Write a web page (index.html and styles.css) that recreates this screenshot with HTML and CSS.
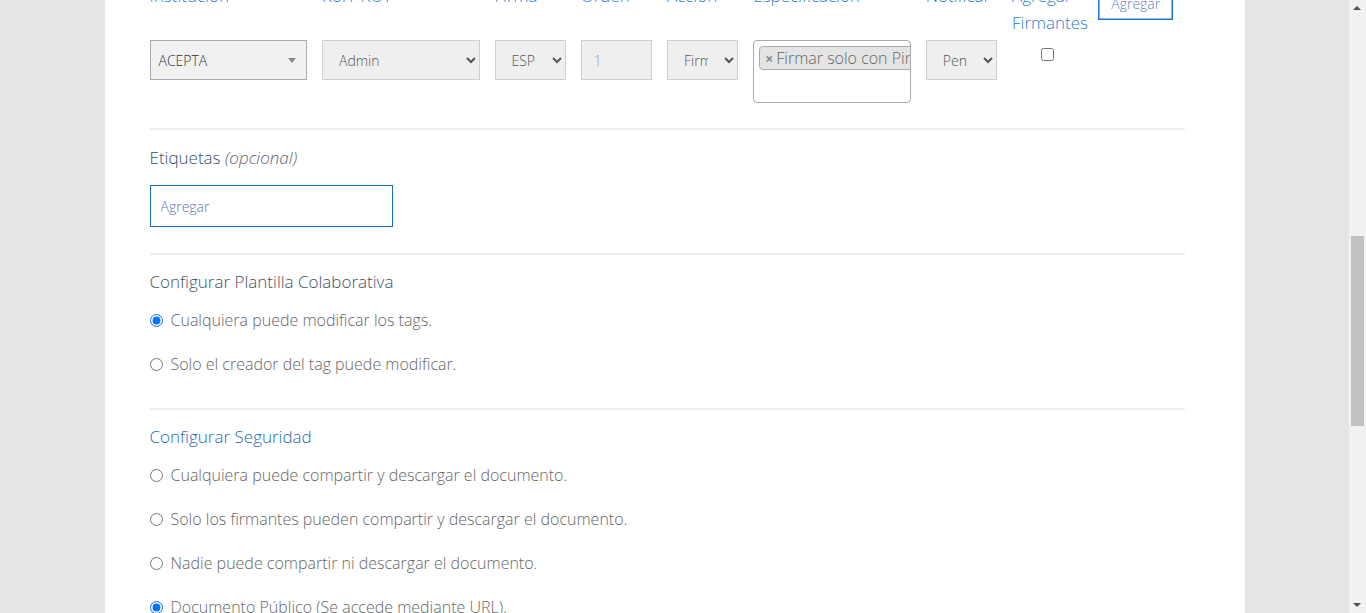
FILE: index.html
```html
<!DOCTYPE html>
<html lang="es">
<head>
<meta charset="utf-8">
<title>Firmantes</title>
<link rel="stylesheet" href="styles.css">
</head>
<body>
<div class="page">
  <div class="above">
    <h2 class="above-title">Nuevo documento</h2>
  </div>

  <div class="signer-row" id="signerRow">
    <div class="col span2">
      <div class="lbl">Institución</div>
      <div class="s2">
        <span>ACEPTA</span>
        <span class="s2-arrow"></span>
      </div>
    </div>
    <div class="col span2">
      <div class="lbl">Rol / RUT</div>
      <select class="ctl sel"><option>Admin</option></select>
    </div>
    <div class="col">
      <div class="lbl">Firma</div>
      <select class="ctl sel"><option>ESP</option></select>
    </div>
    <div class="col">
      <div class="lbl">Orden</div>
      <input class="ctl num" type="text" value="1" readonly>
    </div>
    <div class="col">
      <div class="lbl">Acción</div>
      <select class="ctl sel"><option>Firmar</option></select>
    </div>
    <div class="col span2">
      <div class="lbl">Especificación</div>
      <div class="multi">
        <span class="chip"><span class="chip-x">×</span>Firmar solo con Pin</span>
      </div>
    </div>
    <div class="col">
      <div class="lbl">Notificar</div>
      <select class="ctl sel"><option>Pendiente</option></select>
    </div>
    <div class="col">
      <div class="lbl">Agregar Firmantes</div>
      <div class="chk-wrap"><input type="checkbox" class="chk"></div>
    </div>
    <div class="col">
      <button class="btn-add" type="button">Agregar</button>
    </div>
  </div>

  <section class="section first">
    <div class="heading dark">Etiquetas <em>(opcional)</em></div>
    <input class="tag-input" type="text" placeholder="Agregar">
  </section>

  <section class="section">
    <div class="heading slate">Configurar Plantilla Colaborativa</div>
    <div class="radios">
      <label class="radio"><input type="radio" name="collab" checked>Cualquiera puede modificar los tags.</label>
      <label class="radio"><input type="radio" name="collab">Solo el creador del tag puede modificar.</label>
    </div>
  </section>

  <section class="section">
    <div class="heading blue">Configurar Seguridad</div>
    <div class="radios">
      <label class="radio"><input type="radio" name="sec">Cualquiera puede compartir y descargar el documento.</label>
      <label class="radio"><input type="radio" name="sec">Solo los firmantes pueden compartir y descargar el documento.</label>
      <label class="radio"><input type="radio" name="sec">Nadie puede compartir ni descargar el documento.</label>
      <label class="radio"><input type="radio" name="sec" checked>Documento Público (Se accede mediante URL).</label>
    </div>
  </section>

  <div class="below"></div>
</div>

<div class="vscroll" aria-hidden="true">
  <div class="vs-up"></div>
  <div class="vs-thumb"></div>
  <div class="vs-down"></div>
</div>
<script src="script.js"></script>
</body>
</html>
```

FILE: styles.css
```css
html, body {
  margin: 0;
  padding: 0;
}
body {
  background: #e5e5e5;
  font-family: "Open Sans", "Liberation Sans", sans-serif;
  font-weight: 300;
  color: #666;
  margin-right: 17px;
}
.page {
  width: 1140px;
  margin: 0 auto;
  background: #fff;
  padding: 0 60px 0 45px;
  box-sizing: border-box;
}
.above {
  height: 693px;
  padding-top: 40px;
  box-sizing: border-box;
}
.above-title {
  margin: 0;
  font-weight: 300;
  font-size: 24px;
  color: #34506e;
}
.signer-row {
  display: grid;
  grid-template-columns: repeat(12, 1fr);
  padding-bottom: 25px;
}
.col {
  padding-right: 15px;
  min-width: 0;
}
.span2 {
  grid-column: span 2;
}
.lbl {
  height: 58px;
  font-size: 17px;
  line-height: 27px;
  color: #2f80d4;
}
.ctl {
  display: block;
  width: 100%;
  height: 40px;
  box-sizing: border-box;
  border: 1px solid #cfcfcf;
  background: #efefef;
  font-family: "Open Sans", "Liberation Sans", sans-serif;
  font-size: 14px;
  font-weight: 300;
  color: #555;
  border-radius: 0;
  margin: 0;
}
.sel {
  padding: 0 13px 0 12px;
}
.num {
  padding: 0 12px 0 12px;
  color: #8fa3bd;
  outline: none;
}
.s2 {
  height: 40px;
  box-sizing: border-box;
  border: 1px solid #aaa;
  background: #f1f1f1;
  display: flex;
  align-items: center;
  justify-content: space-between;
  padding: 0 8px 0 8px;
  font-size: 14px;
  font-weight: 300;
  color: #333;
}
.s2-arrow {
  width: 0;
  height: 0;
  border-left: 4px solid transparent;
  border-right: 4px solid transparent;
  border-top: 5px solid #888;
  margin-right: 2px;
}
.multi {
  height: 63px;
  box-sizing: border-box;
  border: 1px solid #aaa;
  border-radius: 4px;
  background: #fff;
  padding: 5px 0 0 5px;
  overflow: hidden;
  white-space: nowrap;
}
.chip {
  display: inline-block;
  border: 1px solid #aaa;
  border-radius: 4px;
  background: #e4e4e4;
  height: 24px;
  line-height: 22px;
  box-sizing: border-box;
  padding: 0 5px;
  font-size: 16px;
  color: #666;
}
.chip-x {
  font-weight: 700;
  color: #888;
  font-size: 14px;
  margin-right: 3px;
}
.chk-wrap {
  display: flex;
  justify-content: center;
  padding-top: 8px;
}
.chk {
  width: 13px;
  height: 13px;
  margin: 0;
}
.btn-add {
  margin-top: 4px;
  height: 34px;
  width: 75px;
  padding: 0;
  border: 1px solid #1a72d2;
  box-shadow: inset 0 0 0 0.5px #1a72d2;
  background: #fff;
  color: #6a80c2;
  font-family: "Open Sans", "Liberation Sans", sans-serif;
  font-size: 14px;
  font-weight: 300;
}
.section {
  border-top: 2px solid #eeeeee;
  padding-top: 15px;
  padding-bottom: 32px;
}
.section.first {
  padding-top: 16px;
  padding-bottom: 26px;
}
.heading {
  font-size: 17px;
  line-height: 24px;
}
.heading em {
  font-style: italic;
  color: #666;
}
.dark { color: #34506e; }
.slate { color: #3e5266; }
.blue { color: #1d6bb5; }
.tag-input {
  display: block;
  margin-top: 15px;
  width: 243px;
  height: 42px;
  box-sizing: border-box;
  border: 1px solid #1b6ec2;
  padding: 0 10px;
  font-family: "Open Sans", "Liberation Sans", sans-serif;
  font-size: 14px;
  font-weight: 300;
  outline: none;
}
.tag-input::placeholder {
  color: #5b79b5;
}
.radios {
  margin-top: 14px;
  display: flex;
  flex-direction: column;
  gap: 20px;
}
.radio {
  display: flex;
  align-items: center;
  font-size: 16px;
  line-height: 24px;
  color: #666;
}
.radio input {
  width: 13px;
  height: 13px;
  margin: 0 8px 0 0;
}
.below {
  height: 560px;
}

/* scrollbar drawn over the right edge */
.vscroll {
  position: fixed;
  top: 0;
  right: 0;
  width: 17px;
  height: 100vh;
  background: #f1f1f1;
}
.vs-up, .vs-down {
  position: absolute;
  left: 0;
  width: 17px;
  height: 17px;
}
.vs-up { top: 0; }
.vs-down { bottom: 0; }
.vs-up::after, .vs-down::after {
  content: "";
  position: absolute;
  left: 4px;
  width: 0;
  height: 0;
  border-left: 4px solid transparent;
  border-right: 4px solid transparent;
}
.vs-up::after {
  top: 6px;
  border-bottom: 4px solid #505050;
}
.vs-down::after {
  bottom: 6px;
  border-top: 4px solid #505050;
}
.vs-thumb {
  position: absolute;
  left: 2px;
  width: 13px;
  top: 236px;
  height: 190px;
  background: #c1c1c1;
}
```

FILE: script.js
```js
(function () {
  function place() {
    var row = document.getElementById('signerRow');
    var top = row.getBoundingClientRect().top + window.scrollY;
    window.scrollTo(0, Math.round(top + 18));
  }
  place();
  window.addEventListener('load', place);
})();
```
